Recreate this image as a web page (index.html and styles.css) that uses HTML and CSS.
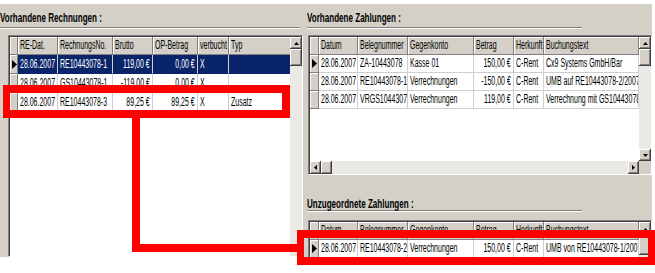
FILE: index.html
```html
<!DOCTYPE html>
<html lang="de">
<head>
<meta charset="utf-8">
<title>Rechnungen und Zahlungen</title>
<link rel="stylesheet" href="styles.css">
</head>
<body>
<div class="app">
  <div class="pane-left">
    <div class="title"><span class="t tb">Vorhandene Rechnungen :</span></div>
    <div class="grid grid-l">
      <div class="gbody">
        <div class="row head">
          <div class="c ind"></div>
          <div class="c"><span class="t">RE-Dat.</span></div>
          <div class="c"><span class="t">RechnungsNo.</span></div>
          <div class="c"><span class="t">Brutto</span></div>
          <div class="c"><span class="t">OP-Betrag</span></div>
          <div class="c"><span class="t">verbucht</span></div>
          <div class="c"><span class="t">Typ</span></div>
        </div>
        <div class="row sel">
          <div class="c ind"><svg class="tri" width="5" height="9" viewBox="0 0 5 9"><path d="M0 0L5 4.5L0 9Z" fill="#000"/></svg></div>
          <div class="c"><span class="t">28.06.2007</span></div>
          <div class="c"><span class="t">RE10443078-1</span></div>
          <div class="c num"><span class="t">119,00 €</span></div>
          <div class="c num"><span class="t">0,00 €</span></div>
          <div class="c"><span class="t">X</span></div>
          <div class="c"></div>
        </div>
        <div class="row">
          <div class="c ind"></div>
          <div class="c"><span class="t">28.06.2007</span></div>
          <div class="c"><span class="t">GS10443078-1</span></div>
          <div class="c num"><span class="t">-119,00 €</span></div>
          <div class="c num"><span class="t">0,00 €</span></div>
          <div class="c"><span class="t">X</span></div>
          <div class="c"></div>
        </div>
        <div class="row">
          <div class="c ind"></div>
          <div class="c"><span class="t">28.06.2007</span></div>
          <div class="c"><span class="t">RE10443078-3</span></div>
          <div class="c num"><span class="t">89,25 €</span></div>
          <div class="c num"><span class="t">89,25 €</span></div>
          <div class="c"><span class="t">X</span></div>
          <div class="c"><span class="t">Zusatz</span></div>
        </div>
      </div>
      <div class="vscroll">
        <div class="sbtn arrow"><svg width="5" height="3" viewBox="0 0 5 3"><path d="M2.5 0L5 3H0Z" fill="#000"/></svg></div>
        <div class="sbtn thumb"></div>
        <div class="track"></div>
      </div>
    </div>
  </div>

  <div class="pane-right">
    <div class="title"><span class="t tb">Vorhandene Zahlungen :</span></div>
    <div class="grid grid-r grid-rt">
      <div class="gbody">
        <div class="row head">
          <div class="c ind"></div>
          <div class="c"><span class="t">Datum</span></div>
          <div class="c"><span class="t">Belegnummer</span></div>
          <div class="c"><span class="t">Gegenkonto</span></div>
          <div class="c"><span class="t">Betrag</span></div>
          <div class="c"><span class="t">Herkunft</span></div>
          <div class="c"><span class="t">Buchungstext</span></div>
        </div>
        <div class="row">
          <div class="c ind"><svg class="tri" width="5" height="9" viewBox="0 0 5 9"><path d="M0 0L5 4.5L0 9Z" fill="#000"/></svg></div>
          <div class="c"><span class="t">28.06.2007</span></div>
          <div class="c"><span class="t">ZA-10443078</span></div>
          <div class="c"><span class="t">Kasse 01</span></div>
          <div class="c num"><span class="t">150,00 €</span></div>
          <div class="c"><span class="t">C-Rent</span></div>
          <div class="c"><span class="t">Cx9 Systems GmbH/Bar</span></div>
        </div>
        <div class="row">
          <div class="c ind"></div>
          <div class="c"><span class="t">28.06.2007</span></div>
          <div class="c"><span class="t">RE10443078-1</span></div>
          <div class="c"><span class="t">Verrechnungen</span></div>
          <div class="c num"><span class="t">-150,00 €</span></div>
          <div class="c"><span class="t">C-Rent</span></div>
          <div class="c"><span class="t">UMB auf RE10443078-2/2007</span></div>
        </div>
        <div class="row">
          <div class="c ind"></div>
          <div class="c"><span class="t">28.06.2007</span></div>
          <div class="c"><span class="t">VRGS10443078</span></div>
          <div class="c"><span class="t">Verrechnungen</span></div>
          <div class="c num"><span class="t">119,00 €</span></div>
          <div class="c"><span class="t">C-Rent</span></div>
          <div class="c"><span class="t">Verrechnung mit GS10443078</span></div>
        </div>
      </div>
      <div class="vscroll">
        <div class="sbtn arrow"><svg width="5" height="3" viewBox="0 0 5 3"><path d="M2.5 0L5 3H0Z" fill="#000"/></svg></div>
        <div class="sbtn thumb"></div>
        <div class="track"></div>
        <div class="sbtn arrow"><svg width="5" height="3" viewBox="0 0 5 3"><path d="M0 0H5L2.5 3Z" fill="#000"/></svg></div>
      </div>
      <div class="hscroll">
        <div class="sbtn harrow"><svg width="3" height="5" viewBox="0 0 3 5"><path d="M3 0V5L0 2.5Z" fill="#000"/></svg></div>
        <div class="sbtn hthumb"></div>
        <div class="track"></div>
        <div class="sbtn harrow"><svg width="3" height="5" viewBox="0 0 3 5"><path d="M0 0L3 2.5L0 5Z" fill="#000"/></svg></div>
      </div>
      <div class="corner"></div>
    </div>

    <div class="title t2"><span class="t tb">Unzugeordnete Zahlungen :</span></div>
    <div class="grid grid-r grid-rb">
      <div class="gbody">
        <div class="row head">
          <div class="c ind"></div>
          <div class="c"><span class="t">Datum</span></div>
          <div class="c"><span class="t">Belegnummer</span></div>
          <div class="c"><span class="t">Gegenkonto</span></div>
          <div class="c"><span class="t">Betrag</span></div>
          <div class="c"><span class="t">Herkunft</span></div>
          <div class="c"><span class="t">Buchungstext</span></div>
        </div>
        <div class="row">
          <div class="c ind"><svg class="tri" width="5" height="9" viewBox="0 0 5 9"><path d="M0 0L5 4.5L0 9Z" fill="#000"/></svg></div>
          <div class="c"><span class="t">28.06.2007</span></div>
          <div class="c"><span class="t">RE10443078-2</span></div>
          <div class="c"><span class="t">Verrechnungen</span></div>
          <div class="c num"><span class="t">150,00 €</span></div>
          <div class="c"><span class="t">C-Rent</span></div>
          <div class="c"><span class="t">UMB von RE10443078-1/2007</span></div>
        </div>
      </div>
      <div class="vscroll">
        <div class="sbtn arrow tall"><svg width="5" height="3" viewBox="0 0 5 3"><path d="M2.5 0L5 3H0Z" fill="#000"/></svg></div>
        <div class="sbtn thumb tall"></div>
        <div class="track"></div>
      </div>
    </div>
  </div>
</div>

<div class="annot">
  <div class="mark r1"></div>
  <div class="mark vline"></div>
  <div class="mark hline"></div>
  <div class="mark r2"></div>
</div>
</body>
</html>
```

FILE: styles.css
```css
* { box-sizing: border-box; }

body {
  margin: 0;
  background: #fff;
  font-family: "Liberation Sans", Arial, sans-serif;
  font-size: 12.5px;
  color: #000;
}

.app {
  margin-top: 4px;
  width: 652px;
  height: 253px;
  background: #d4d0c8;
  display: flex;
  overflow: hidden;
}

.pane-left {
  width: 303px;
  display: flex;
  flex-direction: column;
}

.pane-right {
  width: 345px;
  margin-left: 4px;
  display: flex;
  flex-direction: column;
}

.title {
  padding-top: 7px;
  padding-bottom: 3px;
  height: 24px;
  line-height: 13px;
  border-bottom: 1px solid #808080;
  box-shadow: 0 1px 0 #fff;
  white-space: nowrap;
  flex-shrink: 0;
}

.pane-left .title { margin-right: 3px; }
.pane-right .title { width: 275px; }

.title.t2 {
  padding-top: 22px;
  padding-bottom: 0;
  height: 36px;
}

.t {
  display: inline-block;
  white-space: nowrap;
  transform-origin: 0 50%;
  transform: scaleX(0.56);
}

.t.tb {
  font-size: 13px;
  font-weight: bold;
  transform: scaleX(0.62);
}

/* grids */
.grid {
  display: flex;
  background: #fff;
  border-style: solid;
  border-width: 1px;
  border-color: #808080 #fff #fff #808080;
  padding: 1px 0 0 1px;
  box-shadow: inset 1px 1px 0 #404040;
  margin-top: 7px;
  flex-shrink: 0;
}

.grid-l {
  margin-left: 8px;
  flex: 1;
}

.grid-r { margin-left: 1px; }

.grid-rt {
  height: 140px;
  display: grid;
  grid-template-columns: 1fr 12px;
  grid-template-rows: 1fr 13px;
}

.grid-rb {
  margin-top: 9px;
  flex: 1;
}

.gbody {
  flex: 1;
  min-width: 0;
  overflow: hidden;
  display: flex;
  flex-direction: column;
}

.row {
  display: grid;
  height: 18px;
  flex-shrink: 0;
}

.grid-l .row { grid-template-columns: 8px 40px 55px 40px 45px 31px 62px; }
.grid-r .row { grid-template-columns: 9px 39px 50px 66px 40px 30px 95px; }

.grid-l .row:not(.head) { height: 19px; }

.c {
  border-right: 1px solid #cfcfcf;
  border-bottom: 1px solid #cfcfcf;
  overflow: hidden;
  white-space: nowrap;
  line-height: 17px;
  padding-left: 2px;
}

.grid-l .row:not(.head) .c { line-height: 18px; }

.head .c {
  background: #d4d0c8;
  border-color: #808080;
  box-shadow: inset 1px 1px 0 #fff;
}

.c.ind {
  background: #d4d0c8;
  border-right-color: #808080;
  border-bottom-color: #808080;
  box-shadow: inset 1px 1px 0 #fff;
  padding: 0 0 0 1px;
  display: flex;
  align-items: center;
  justify-content: center;
}

.c.num {
  display: flex;
  justify-content: flex-end;
  padding-left: 0;
  padding-right: 2px;
}

.c.num .t {
  flex-shrink: 0;
  transform-origin: 100% 50%;
}

.sel .c:not(.ind) {
  background: #0a246a;
  color: #fff;
  border-bottom-color: #0a246a;
}

/* scrollbars */
.vscroll {
  width: 12px;
  display: flex;
  flex-direction: column;
  background: #ebe9e5;
}

.hscroll {
  display: flex;
  background: #ebe9e5;
}

.track { flex: 1; }

.sbtn {
  background: #d4d0c8;
  box-shadow: inset -1px -1px 0 #404040, inset 1px 1px 0 #fff, inset -2px -2px 0 #808080;
  display: flex;
  align-items: center;
  justify-content: center;
  flex-shrink: 0;
}

.sbtn.arrow { height: 12px; }
.sbtn.thumb { height: 17px; }
.sbtn.arrow.tall { height: 14px; }
.sbtn.thumb.tall { height: 19px; }
.sbtn.harrow { width: 11px; }
.sbtn.hthumb { width: 11px; }

.corner { background: #d4d0c8; }

/* red annotations */
.annot {
  position: absolute;
  left: 0;
  top: 0;
  width: 655px;
  height: 273px;
  pointer-events: none;
}

.mark {
  position: absolute;
}

.r1 {
  left: 3px;
  top: 85px;
  width: 287px;
  height: 33px;
  border: 8px solid #f00;
  border-left-width: 7px;
}

.vline {
  left: 132px;
  top: 112px;
  width: 8px;
  height: 140px;
  background: #f00;
}

.hline {
  left: 132px;
  top: 244px;
  width: 168px;
  height: 8px;
  background: #f00;
}

.r2 {
  left: 297px;
  top: 230px;
  width: 358px;
  height: 35px;
  border: 8px solid #f00;
  border-left-width: 7px;
  border-right-width: 7px;
}
```
